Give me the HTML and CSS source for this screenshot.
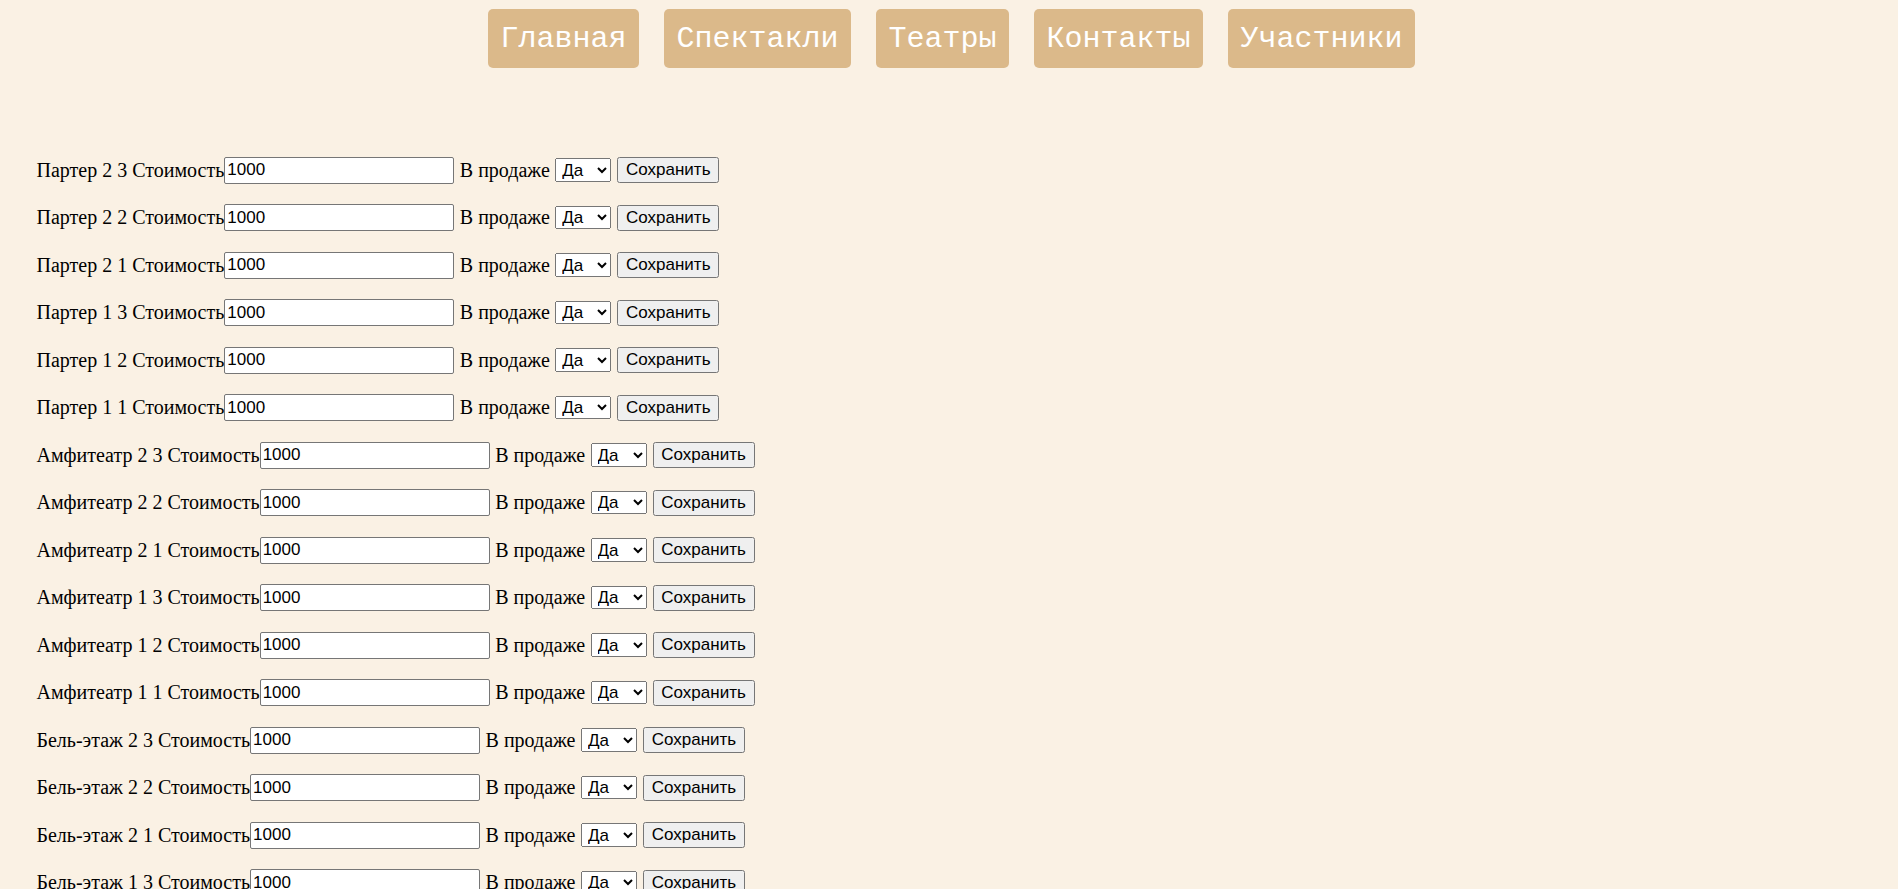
FILE: index.html
```html
<!DOCTYPE html>
<html lang="ru">
<head>
<meta charset="utf-8">
<title>Места</title>
<link rel="stylesheet" href="styles.css">
</head>
<body>
<nav class="nav">
  <a class="nav-btn" href="#">Главная</a>
  <a class="nav-btn" href="#">Спектакли</a>
  <a class="nav-btn" href="#">Театры</a>
  <a class="nav-btn" href="#">Контакты</a>
  <a class="nav-btn" href="#">Участники</a>
</nav>
<main class="list">
  <form class="row"><span class="lbl">Партер 2 3 Стоимость</span><input class="price" type="text" value="1000"><span class="sale">В продаже</span><select class="sel"><option>Да</option><option>Нет</option></select><button class="save" type="button">Сохранить</button></form>
  <form class="row"><span class="lbl">Партер 2 2 Стоимость</span><input class="price" type="text" value="1000"><span class="sale">В продаже</span><select class="sel"><option>Да</option><option>Нет</option></select><button class="save" type="button">Сохранить</button></form>
  <form class="row"><span class="lbl">Партер 2 1 Стоимость</span><input class="price" type="text" value="1000"><span class="sale">В продаже</span><select class="sel"><option>Да</option><option>Нет</option></select><button class="save" type="button">Сохранить</button></form>
  <form class="row"><span class="lbl">Партер 1 3 Стоимость</span><input class="price" type="text" value="1000"><span class="sale">В продаже</span><select class="sel"><option>Да</option><option>Нет</option></select><button class="save" type="button">Сохранить</button></form>
  <form class="row"><span class="lbl">Партер 1 2 Стоимость</span><input class="price" type="text" value="1000"><span class="sale">В продаже</span><select class="sel"><option>Да</option><option>Нет</option></select><button class="save" type="button">Сохранить</button></form>
  <form class="row"><span class="lbl">Партер 1 1 Стоимость</span><input class="price" type="text" value="1000"><span class="sale">В продаже</span><select class="sel"><option>Да</option><option>Нет</option></select><button class="save" type="button">Сохранить</button></form>
  <form class="row"><span class="lbl">Амфитеатр 2 3 Стоимость</span><input class="price" type="text" value="1000"><span class="sale">В продаже</span><select class="sel"><option>Да</option><option>Нет</option></select><button class="save" type="button">Сохранить</button></form>
  <form class="row"><span class="lbl">Амфитеатр 2 2 Стоимость</span><input class="price" type="text" value="1000"><span class="sale">В продаже</span><select class="sel"><option>Да</option><option>Нет</option></select><button class="save" type="button">Сохранить</button></form>
  <form class="row"><span class="lbl">Амфитеатр 2 1 Стоимость</span><input class="price" type="text" value="1000"><span class="sale">В продаже</span><select class="sel"><option>Да</option><option>Нет</option></select><button class="save" type="button">Сохранить</button></form>
  <form class="row"><span class="lbl">Амфитеатр 1 3 Стоимость</span><input class="price" type="text" value="1000"><span class="sale">В продаже</span><select class="sel"><option>Да</option><option>Нет</option></select><button class="save" type="button">Сохранить</button></form>
  <form class="row"><span class="lbl">Амфитеатр 1 2 Стоимость</span><input class="price" type="text" value="1000"><span class="sale">В продаже</span><select class="sel"><option>Да</option><option>Нет</option></select><button class="save" type="button">Сохранить</button></form>
  <form class="row"><span class="lbl">Амфитеатр 1 1 Стоимость</span><input class="price" type="text" value="1000"><span class="sale">В продаже</span><select class="sel"><option>Да</option><option>Нет</option></select><button class="save" type="button">Сохранить</button></form>
  <form class="row"><span class="lbl">Бель-этаж 2 3 Стоимость</span><input class="price" type="text" value="1000"><span class="sale">В продаже</span><select class="sel"><option>Да</option><option>Нет</option></select><button class="save" type="button">Сохранить</button></form>
  <form class="row"><span class="lbl">Бель-этаж 2 2 Стоимость</span><input class="price" type="text" value="1000"><span class="sale">В продаже</span><select class="sel"><option>Да</option><option>Нет</option></select><button class="save" type="button">Сохранить</button></form>
  <form class="row"><span class="lbl">Бель-этаж 2 1 Стоимость</span><input class="price" type="text" value="1000"><span class="sale">В продаже</span><select class="sel"><option>Да</option><option>Нет</option></select><button class="save" type="button">Сохранить</button></form>
  <form class="row"><span class="lbl">Бель-этаж 1 3 Стоимость</span><input class="price" type="text" value="1000"><span class="sale">В продаже</span><select class="sel"><option>Да</option><option>Нет</option></select><button class="save" type="button">Сохранить</button></form>
  <form class="row"><span class="lbl">Бель-этаж 1 2 Стоимость</span><input class="price" type="text" value="1000"><span class="sale">В продаже</span><select class="sel"><option>Да</option><option>Нет</option></select><button class="save" type="button">Сохранить</button></form>
  <form class="row"><span class="lbl">Бель-этаж 1 1 Стоимость</span><input class="price" type="text" value="1000"><span class="sale">В продаже</span><select class="sel"><option>Да</option><option>Нет</option></select><button class="save" type="button">Сохранить</button></form>
</main>
</body>
</html>
```
FILE: styles.css
```css
html, body {
  margin: 0;
  padding: 0;
  background: #faf1e4;
}
body {
  font-family: "Liberation Serif", "Times New Roman", serif;
  font-size: 20px;
  color: #000;
}
.nav {
  display: flex;
  justify-content: center;
  gap: 25px;
  padding: 9px 0 0 5px;
}
.nav-btn {
  display: block;
  font-family: "Liberation Mono", "Courier New", monospace;
  font-size: 30px;
  line-height: 34px;
  padding: 12.5px 12.5px 12.5px;
  color: #fff;
  background: #dbb98a;
  border-radius: 5px;
  text-decoration: none;
}
.list {
  display: flex;
  flex-direction: column;
  gap: 20.5px;
  padding: 88.5px 0 40px 36.5px;
}
.row {
  display: flex;
  align-items: center;
  height: 27px;
  margin: 0;
}
.lbl, .sale {
  white-space: nowrap;
  line-height: 23px;
}
.lbl {
  min-width: max-content;
}
.sale {
  margin: 0 5.5px 0 5.5px;
}
.price {
  box-sizing: border-box;
  width: 230px;
  height: 27px;
  margin: 0;
  padding: 1px 2px;
  font-family: "Liberation Sans", Arial, sans-serif;
  font-size: 17px;
  color: #000;
  background: #fff;
  border: 1px solid #767676;
  border-radius: 2px;
}
.sel {
  box-sizing: border-box;
  width: 56px;
  height: 23.5px;
  margin: 0 6px 0 0;
  padding: 0 0 0 2px;
  font-family: "Liberation Sans", Arial, sans-serif;
  font-size: 17px;
  color: #000;
}
.save {
  box-sizing: border-box;
  width: 102px;
  height: 26px;
  margin: 0;
  padding: 1px 6px;
  font-family: "Liberation Sans", Arial, sans-serif;
  font-size: 17px;
  color: #000;
}
```
